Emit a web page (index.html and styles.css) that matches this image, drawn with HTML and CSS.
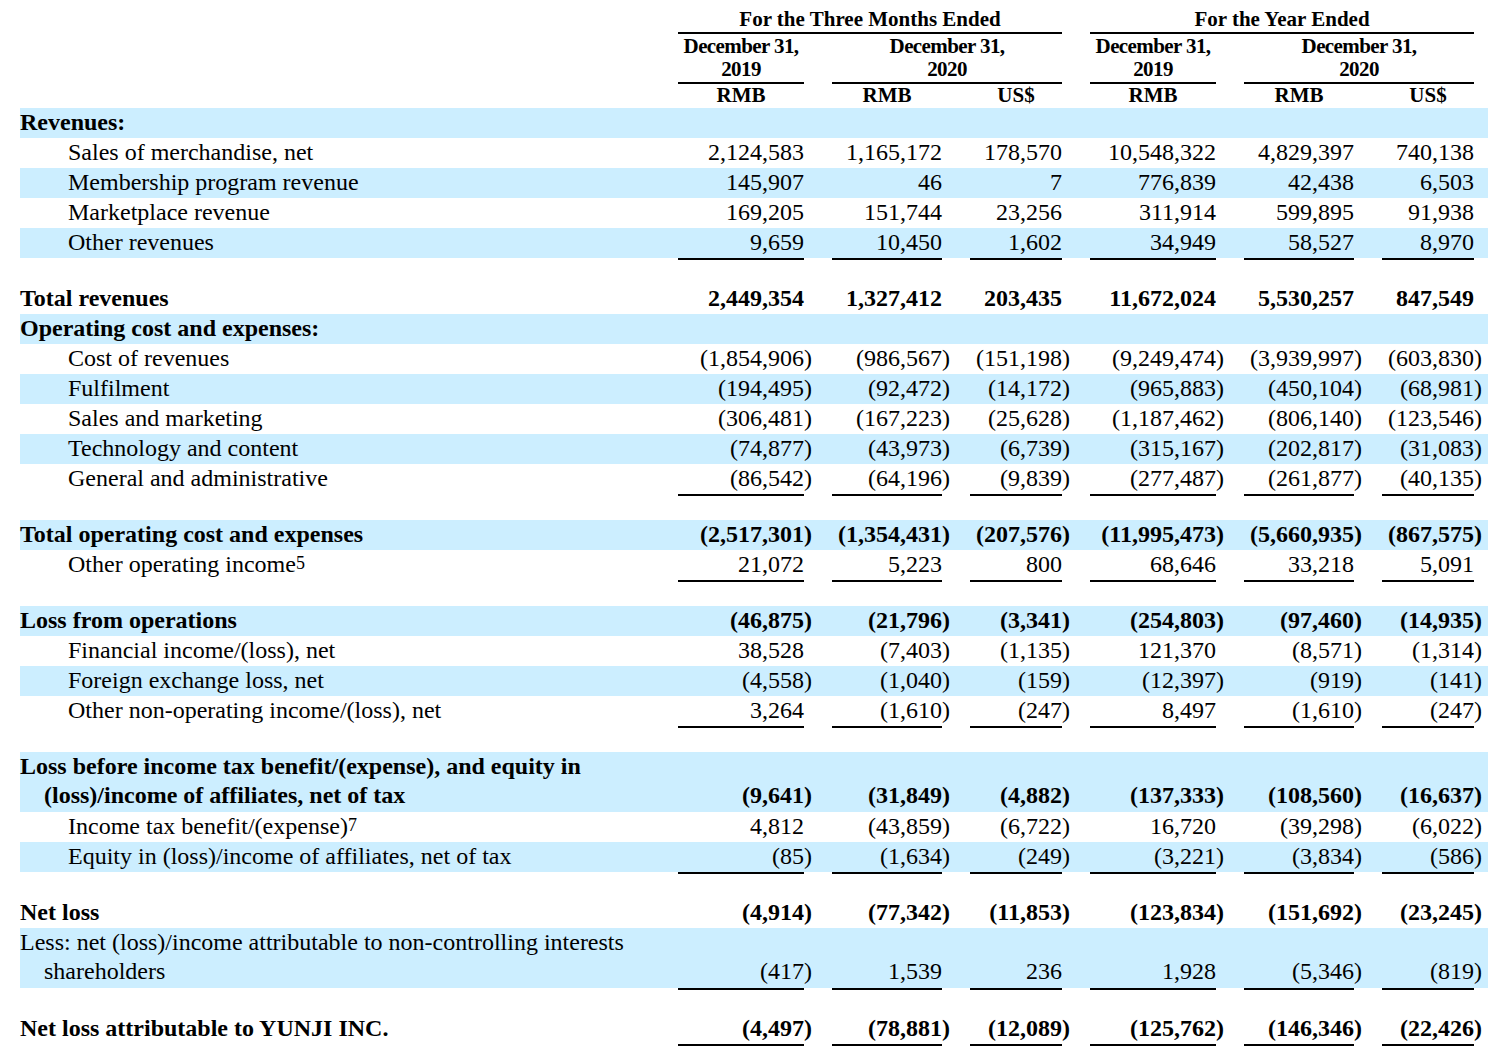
FILE: index.html
```html
<!DOCTYPE html>
<html lang="en">
<head>
<meta charset="utf-8">
<title>Unaudited Condensed Consolidated Statements of Operations</title>
<link rel="stylesheet" href="styles.css">
</head>
<body>
<div class="sheet">
  <div class="grid head h1">
    <div></div>
    <div class="grp g1">For the Three Months Ended</div>
    <div class="grp g2">For the Year Ended</div>
  </div>
  <div class="grid head h2">
    <div></div>
    <div class="date c2">December 31,<br>2019</div>
    <div class="date c34">December 31,<br>2020</div>
    <div class="date c5">December 31,<br>2019</div>
    <div class="date c67">December 31,<br>2020</div>
  </div>
  <div class="grid head h3">
    <div></div>
    <div>RMB</div><div>RMB</div><div>US$</div><div>RMB</div><div>RMB</div><div>US$</div>
  </div>

  <div class="grid row hl b"><div class="lbl">Revenues:</div></div>
  <div class="grid row"><div class="lbl ind">Sales of merchandise, net</div><div class="num">2,124,583</div><div class="num">1,165,172</div><div class="num">178,570</div><div class="num">10,548,322</div><div class="num">4,829,397</div><div class="num">740,138</div></div>
  <div class="grid row hl"><div class="lbl ind">Membership program revenue</div><div class="num">145,907</div><div class="num">46</div><div class="num">7</div><div class="num">776,839</div><div class="num">42,438</div><div class="num">6,503</div></div>
  <div class="grid row"><div class="lbl ind">Marketplace revenue</div><div class="num">169,205</div><div class="num">151,744</div><div class="num">23,256</div><div class="num">311,914</div><div class="num">599,895</div><div class="num">91,938</div></div>
  <div class="grid row hl"><div class="lbl ind">Other revenues</div><div class="num">9,659</div><div class="num">10,450</div><div class="num">1,602</div><div class="num">34,949</div><div class="num">58,527</div><div class="num">8,970</div></div>
  <div class="grid sp"><div></div><div class="ul"></div><div class="ul"></div><div class="ul"></div><div class="ul"></div><div class="ul"></div><div class="ul"></div></div>

  <div class="grid row b"><div class="lbl">Total revenues</div><div class="num">2,449,354</div><div class="num">1,327,412</div><div class="num">203,435</div><div class="num">11,672,024</div><div class="num">5,530,257</div><div class="num">847,549</div></div>
  <div class="grid row hl b"><div class="lbl">Operating cost and expenses:</div></div>
  <div class="grid row"><div class="lbl ind">Cost of revenues</div><div class="num">(1,854,906<span class="rp">)</span></div><div class="num">(986,567<span class="rp">)</span></div><div class="num">(151,198<span class="rp">)</span></div><div class="num">(9,249,474<span class="rp">)</span></div><div class="num">(3,939,997<span class="rp">)</span></div><div class="num">(603,830<span class="rp">)</span></div></div>
  <div class="grid row hl"><div class="lbl ind">Fulfilment</div><div class="num">(194,495<span class="rp">)</span></div><div class="num">(92,472<span class="rp">)</span></div><div class="num">(14,172<span class="rp">)</span></div><div class="num">(965,883<span class="rp">)</span></div><div class="num">(450,104<span class="rp">)</span></div><div class="num">(68,981<span class="rp">)</span></div></div>
  <div class="grid row"><div class="lbl ind">Sales and marketing</div><div class="num">(306,481<span class="rp">)</span></div><div class="num">(167,223<span class="rp">)</span></div><div class="num">(25,628<span class="rp">)</span></div><div class="num">(1,187,462<span class="rp">)</span></div><div class="num">(806,140<span class="rp">)</span></div><div class="num">(123,546<span class="rp">)</span></div></div>
  <div class="grid row hl"><div class="lbl ind">Technology and content</div><div class="num">(74,877<span class="rp">)</span></div><div class="num">(43,973<span class="rp">)</span></div><div class="num">(6,739<span class="rp">)</span></div><div class="num">(315,167<span class="rp">)</span></div><div class="num">(202,817<span class="rp">)</span></div><div class="num">(31,083<span class="rp">)</span></div></div>
  <div class="grid row"><div class="lbl ind">General and administrative</div><div class="num">(86,542<span class="rp">)</span></div><div class="num">(64,196<span class="rp">)</span></div><div class="num">(9,839<span class="rp">)</span></div><div class="num">(277,487<span class="rp">)</span></div><div class="num">(261,877<span class="rp">)</span></div><div class="num">(40,135<span class="rp">)</span></div></div>
  <div class="grid sp"><div></div><div class="ul"></div><div class="ul"></div><div class="ul"></div><div class="ul"></div><div class="ul"></div><div class="ul"></div></div>

  <div class="grid row hl b"><div class="lbl">Total operating cost and expenses</div><div class="num">(2,517,301<span class="rp">)</span></div><div class="num">(1,354,431<span class="rp">)</span></div><div class="num">(207,576<span class="rp">)</span></div><div class="num">(11,995,473<span class="rp">)</span></div><div class="num">(5,660,935<span class="rp">)</span></div><div class="num">(867,575<span class="rp">)</span></div></div>
  <div class="grid row"><div class="lbl ind">Other operating income<span class="fn">5</span></div><div class="num">21,072</div><div class="num">5,223</div><div class="num">800</div><div class="num">68,646</div><div class="num">33,218</div><div class="num">5,091</div></div>
  <div class="grid sp"><div></div><div class="ul"></div><div class="ul"></div><div class="ul"></div><div class="ul"></div><div class="ul"></div><div class="ul"></div></div>

  <div class="grid row hl b"><div class="lbl">Loss from operations</div><div class="num">(46,875<span class="rp">)</span></div><div class="num">(21,796<span class="rp">)</span></div><div class="num">(3,341<span class="rp">)</span></div><div class="num">(254,803<span class="rp">)</span></div><div class="num">(97,460<span class="rp">)</span></div><div class="num">(14,935<span class="rp">)</span></div></div>
  <div class="grid row"><div class="lbl ind">Financial income/(loss), net</div><div class="num">38,528</div><div class="num">(7,403<span class="rp">)</span></div><div class="num">(1,135<span class="rp">)</span></div><div class="num">121,370</div><div class="num">(8,571<span class="rp">)</span></div><div class="num">(1,314<span class="rp">)</span></div></div>
  <div class="grid row hl"><div class="lbl ind">Foreign exchange loss, net</div><div class="num">(4,558<span class="rp">)</span></div><div class="num">(1,040<span class="rp">)</span></div><div class="num">(159<span class="rp">)</span></div><div class="num">(12,397<span class="rp">)</span></div><div class="num">(919<span class="rp">)</span></div><div class="num">(141<span class="rp">)</span></div></div>
  <div class="grid row"><div class="lbl ind">Other non-operating income/(loss), net</div><div class="num">3,264</div><div class="num">(1,610<span class="rp">)</span></div><div class="num">(247<span class="rp">)</span></div><div class="num">8,497</div><div class="num">(1,610<span class="rp">)</span></div><div class="num">(247<span class="rp">)</span></div></div>
  <div class="grid sp"><div></div><div class="ul"></div><div class="ul"></div><div class="ul"></div><div class="ul"></div><div class="ul"></div><div class="ul"></div></div>

  <div class="grid row tall hl b"><div class="lbl hang">Loss before income tax benefit/(expense), and equity in<br>(loss)/income of affiliates, net of tax</div><div class="num">(9,641<span class="rp">)</span></div><div class="num">(31,849<span class="rp">)</span></div><div class="num">(4,882<span class="rp">)</span></div><div class="num">(137,333<span class="rp">)</span></div><div class="num">(108,560<span class="rp">)</span></div><div class="num">(16,637<span class="rp">)</span></div></div>
  <div class="grid row"><div class="lbl ind">Income tax benefit/(expense)<span class="fn">7</span></div><div class="num">4,812</div><div class="num">(43,859<span class="rp">)</span></div><div class="num">(6,722<span class="rp">)</span></div><div class="num">16,720</div><div class="num">(39,298<span class="rp">)</span></div><div class="num">(6,022<span class="rp">)</span></div></div>
  <div class="grid row hl"><div class="lbl ind">Equity in (loss)/income of affiliates, net of tax</div><div class="num">(85<span class="rp">)</span></div><div class="num">(1,634<span class="rp">)</span></div><div class="num">(249<span class="rp">)</span></div><div class="num">(3,221<span class="rp">)</span></div><div class="num">(3,834<span class="rp">)</span></div><div class="num">(586<span class="rp">)</span></div></div>
  <div class="grid sp"><div></div><div class="ul"></div><div class="ul"></div><div class="ul"></div><div class="ul"></div><div class="ul"></div><div class="ul"></div></div>

  <div class="grid row b"><div class="lbl">Net loss</div><div class="num">(4,914<span class="rp">)</span></div><div class="num">(77,342<span class="rp">)</span></div><div class="num">(11,853<span class="rp">)</span></div><div class="num">(123,834<span class="rp">)</span></div><div class="num">(151,692<span class="rp">)</span></div><div class="num">(23,245<span class="rp">)</span></div></div>
  <div class="grid row tall hl"><div class="lbl hang">Less: net (loss)/income attributable to non-controlling interests<br>shareholders</div><div class="num">(417<span class="rp">)</span></div><div class="num">1,539</div><div class="num">236</div><div class="num">1,928</div><div class="num">(5,346<span class="rp">)</span></div><div class="num">(819<span class="rp">)</span></div></div>
  <div class="grid sp"><div></div><div class="ul"></div><div class="ul"></div><div class="ul"></div><div class="ul"></div><div class="ul"></div><div class="ul"></div></div>

  <div class="grid row b"><div class="lbl">Net loss attributable to YUNJI INC.</div><div class="num">(4,497<span class="rp">)</span></div><div class="num">(78,881<span class="rp">)</span></div><div class="num">(12,089<span class="rp">)</span></div><div class="num">(125,762<span class="rp">)</span></div><div class="num">(146,346<span class="rp">)</span></div><div class="num">(22,426<span class="rp">)</span></div></div>
  <div class="grid sp-end"><div></div><div class="ul"></div><div class="ul"></div><div class="ul"></div><div class="ul"></div><div class="ul"></div><div class="ul"></div></div>
</div>
</body>
</html>
```

FILE: styles.css
```css
html, body {
  margin: 0;
  padding: 0;
  background: #ffffff;
}

body {
  font-family: "Liberation Serif", "Times New Roman", serif;
  font-size: 24px;
  color: #000000;
}

.sheet {
  width: 1468px;
  margin-left: 20px;
}

.grid {
  display: grid;
  grid-template-columns: 630px 126px 110px 92px 126px 110px 92px;
  column-gap: 28px;
  padding-right: 14px;
}

/* header */
.head {
  font-size: 21px;
  font-weight: bold;
  text-align: center;
  white-space: nowrap;
}

.h1 {
  padding-top: 6px;
  line-height: 26px;
}

.grp {
  border-bottom: 2px solid #000;
}

.g1 { grid-column: 2 / 5; }
.g2 { grid-column: 5 / 8; }

.h2 {
  padding-top: 1px;
  line-height: 23px;
}

.date {
  border-bottom: 2px solid #000;
  padding-bottom: 1px;
  letter-spacing: -0.6px;
}

.c2 { grid-column: 2; }
.c34 { grid-column: 3 / 5; }
.c5 { grid-column: 5; }
.c67 { grid-column: 6 / 8; }

.h3 {
  line-height: 23px;
  padding-bottom: 1px;
}

/* body rows */
.row {
  line-height: 28px;
  padding-bottom: 2px;
  align-items: end;
}

.row.tall {
  line-height: 29px;
}

.hl {
  background: #cceeff;
}

.b {
  font-weight: bold;
}

.lbl {
  white-space: nowrap;
}

.ind {
  padding-left: 48px;
}

.hang {
  padding-left: 24px;
  text-indent: -24px;
}

.num {
  text-align: right;
  white-space: nowrap;
}

.rp {
  margin-right: -8px;
}

.fn {
  font-size: 18px;
  line-height: 1;
  vertical-align: 3px;
}

.sp {
  height: 26px;
}

.sp-end {
  height: 4px;
}

.ul {
  border-top: 2px solid #000;
}
```
